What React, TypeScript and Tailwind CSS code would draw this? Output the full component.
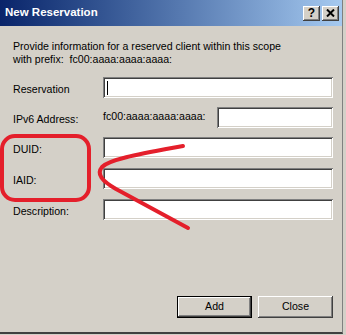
import React from 'react';

const raised =
  'shadow-[inset_-1px_-1px_#404040,inset_1px_1px_#ffffff,inset_-2px_-2px_#808080,inset_2px_2px_#d4d0c8]';
const sunken =
  'shadow-[inset_1px_1px_#808080,inset_-1px_-1px_#ffffff,inset_2px_2px_#404040,inset_-2px_-2px_#d4d0c8]';

const rows = [
  { label: 'Reservation', mt: 'mt-0', caret: true },
  { label: 'IPv6 Address:', mt: 'mt-[9px]', prefix: 'fc00:aaaa:aaaa:aaaa:' },
  { label: 'DUID:', mt: 'mt-[9px]' },
  { label: 'IAID:', mt: 'mt-[10px]' },
  { label: 'Description:', mt: 'mt-[10px]' },
];

function TitleButton({ children }: { children: React.ReactNode }) {
  return (
    <div className={`w-[17px] h-[15px] bg-[#d4d0c8] ${raised} flex items-center justify-center`}>
      {children}
    </div>
  );
}

function Field({ caret }: { caret?: boolean }) {
  return (
    <div className={`flex-1 h-[21px] bg-white ${sunken} flex items-center pl-[4px]`}>
      {caret && <div className="w-px h-[14px] bg-black" />}
    </div>
  );
}

function Annotation() {
  // red marker scribble drawn over the dialog
  return (
    <svg className="absolute inset-0 pointer-events-none" width="346" height="335" viewBox="0 0 346 335">
      <rect x="2" y="136" width="87" height="64" rx="13" fill="none" stroke="#e41f2b" strokeWidth="4" />
      <path
        d="M183,146 C140,154 110,159 102,167 C96,174 102,181 116,189 L188,228"
        fill="none"
        stroke="#e41f2b"
        strokeWidth="4"
        strokeLinecap="round"
        strokeLinejoin="round"
      />
    </svg>
  );
}

export default function App() {
  return (
    <div className="relative w-[346px] h-[335px] bg-[#d4d0c8] overflow-hidden font-['Liberation_Sans',Arial,sans-serif] text-[10.6px] text-black">
      <div className="flex flex-col w-[343px] h-[334px] border-r border-b-2 border-r-[#808080] border-b-[#404040]">
        {/* title bar */}
        <div className="h-[26px] flex items-center bg-linear-to-r from-[#0a246a] to-[#a6caf0] pl-[5px] pr-[3px]">
          <span className="flex-1 text-white font-bold text-[11.5px] leading-none">New Reservation</span>
          <div className="flex gap-[2px]">
            <TitleButton>
              <span className="font-bold text-[12px] leading-none pb-px">?</span>
            </TitleButton>
            <TitleButton>
              <svg width="9" height="8" viewBox="0 0 9 8">
                <path d="M1,0.5 L8,7.5 M8,0.5 L1,7.5" stroke="#000" strokeWidth="2" />
              </svg>
            </TitleButton>
          </div>
        </div>

        {/* body */}
        <div className="flex-1 flex flex-col pl-[13px] pr-[9px] pt-[14px] pb-[14px]">
          <p className="leading-[13px]">
            Provide information for a reserved client within this scope
            <br />
            with prefix:&nbsp; fc00:aaaa:aaaa:aaaa:
          </p>

          <div className="flex flex-col mt-[11px]">
            {rows.map((r) => (
              <div key={r.label} className={`flex items-center ${r.mt}`}>
                <span className="w-[90px] pt-[4px]">{r.label}</span>
                {r.prefix && <span className="w-[114px] pb-[2px] whitespace-nowrap">{r.prefix}</span>}
                <Field caret={r.caret} />
              </div>
            ))}
          </div>

          <div className="mt-auto flex justify-end gap-[6px]">
            <button className="w-[75px] h-[22px] border border-black bg-[#d4d0c8] p-0">
              <div className={`w-full h-full flex items-center justify-center ${raised}`}>Add</div>
            </button>
            <button className={`w-[75px] h-[22px] bg-[#d4d0c8] flex items-center justify-center ${raised}`}>
              Close
            </button>
          </div>
        </div>
      </div>
      <Annotation />
    </div>
  );
}
